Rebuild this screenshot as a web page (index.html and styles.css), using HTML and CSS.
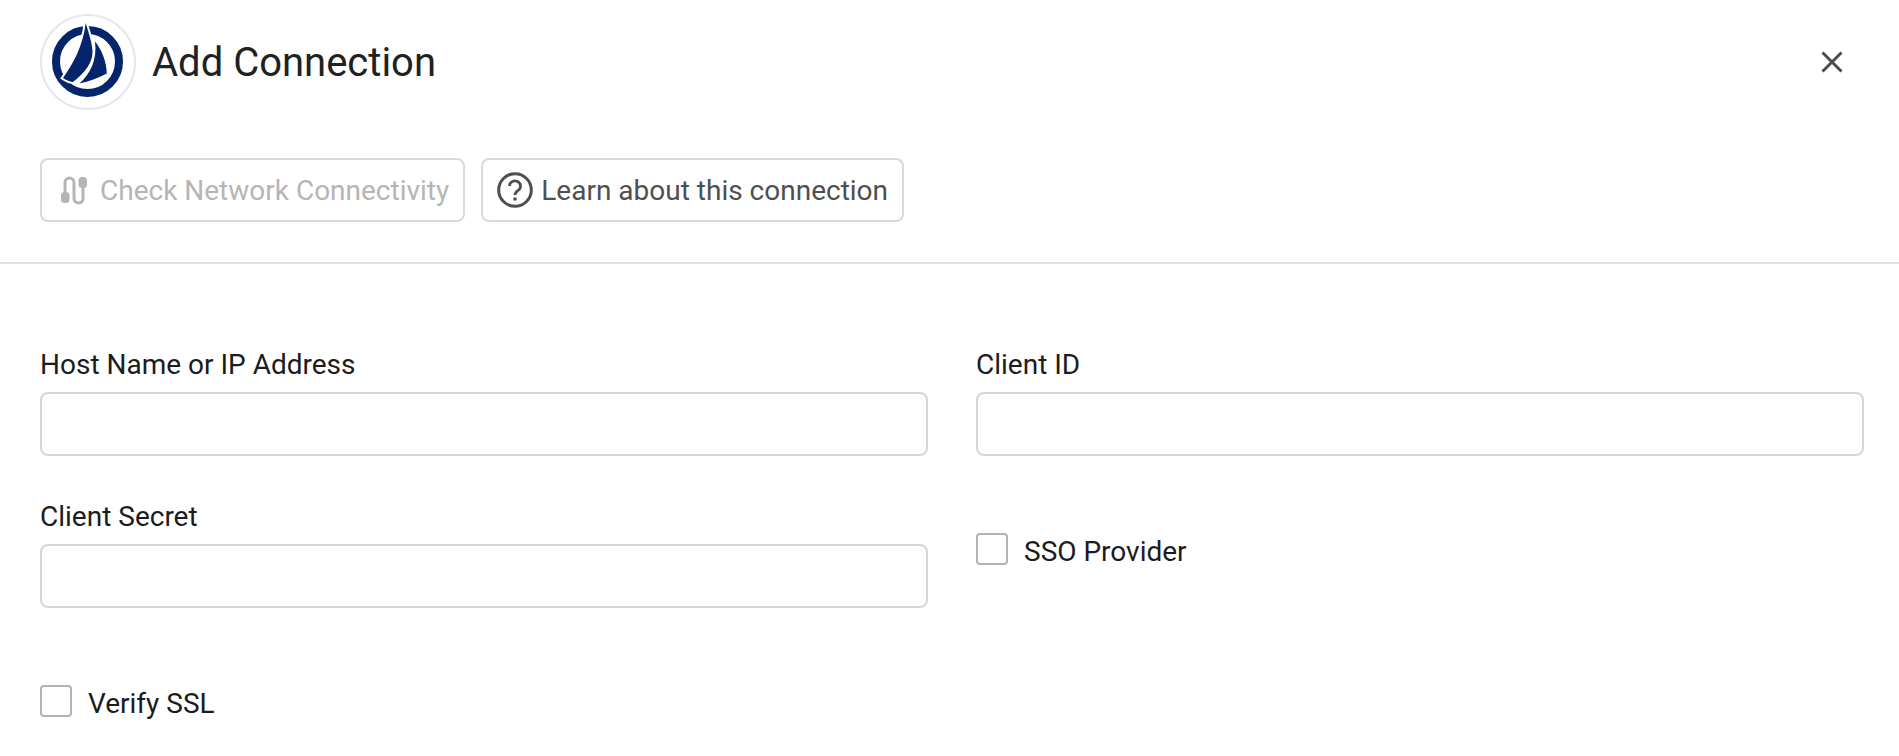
FILE: index.html
```html
<!DOCTYPE html>
<html>
<head>
    <title>Add Connection</title>
    <link rel="stylesheet" href="styles.css">
</head>
<body>
    <div class="dialog-head">
        <div class="title-row">
            <svg class="logo" width="96" height="96" viewBox="0 0 96 96">
                <circle cx="48" cy="48" r="47" fill="#fff" stroke="#e3e6ee" stroke-width="2"/>
                <circle cx="47.5" cy="47.5" r="31.5" fill="none" stroke="#04256b" stroke-width="8"/>
                <path d="M45.7 9 C49 20 52.5 30 52.5 38 C52.5 48 46 58 33 68 C29 67.5 26 66 23 64 C33 50 43 32 45.7 9 Z" fill="#fff" stroke="#fff" stroke-width="4"/>
                <path d="M45.7 9 C49 20 52.5 30 52.5 38 C52.5 48 46 58 33 68 C29 67.5 26 66 23 64 C33 50 43 32 45.7 9 Z" fill="#04256b"/>
                <path d="M55 27.5 C62 36 66.5 48 66.8 59.5 C58 64 49 67.5 39.5 69.5 C50 60 57.5 46 55 27.5 Z" fill="#04256b"/>
            </svg>
            <h1>Add Connection</h1>
            <button class="close-btn" aria-label="Close">
                <svg width="24" height="24" viewBox="0 0 24 24"><path d="M2.5 2.5 L21.5 21.5 M21.5 2.5 L2.5 21.5" stroke="#4d4d4d" stroke-width="3" fill="none"/></svg>
            </button>
        </div>
        <div class="actions">
            <button class="action-btn" disabled>
                <svg width="36" height="36" viewBox="0 0 36 36">
                    <path d="M9 22 V10.5 a4.5 4.5 0 0 1 9 0 V26.5 a4.5 4.5 0 0 0 9 0 V13" fill="none" stroke="currentColor" stroke-width="3"/>
                    <rect x="5" y="20" width="8.5" height="11" rx="3.5" fill="currentColor"/>
                    <rect x="22.5" y="5" width="8.5" height="11" rx="3.5" fill="currentColor"/>
                </svg>
                Check Network Connectivity
            </button>
            <button class="action-btn">
                <svg width="36" height="36" viewBox="0 0 36 36">
                    <circle cx="18" cy="18" r="16.3" fill="none" stroke="currentColor" stroke-width="3"/>
                    <path d="M12.5 14 a5.5 5.2 0 1 1 8.6 4.4 c-2 1.4 -3.1 2.2 -3.1 4.6" fill="none" stroke="currentColor" stroke-width="2.8"/>
                    <circle cx="18" cy="27" r="1.8" fill="currentColor"/>
                </svg>
                Learn about this connection
            </button>
        </div>
    </div>

    <form class="conn-form">
        <div class="field">
            <label for="host">Host Name or IP Address</label>
            <input id="host" type="text">
        </div>
        <div class="field">
            <label for="client-id">Client ID</label>
            <input id="client-id" type="text">
        </div>
        <div class="field">
            <label for="secret">Client Secret</label>
            <input id="secret" type="text">
        </div>
        <div class="check-cell sso">
            <label class="check"><span class="box"></span><span class="check-text">SSO Provider</span></label>
        </div>
        <div class="check-cell">
            <label class="check"><span class="box"></span><span class="check-text">Verify SSL</span></label>
        </div>
    </form>
</body>
</html>
```

FILE: styles.css
```css
html, body { margin: 0; padding: 0; background: #fff; }
body { font-family: Roboto, Arial, sans-serif; color: #1c1c1c; height: 756px; overflow: hidden; }

.dialog-head { box-sizing: border-box; height: 264px; border-bottom: 2px solid #e0e0e0; padding: 14px 35px 0 40px; }
.title-row { display: flex; align-items: center; height: 96px; }
.logo { flex: none; }
h1 { margin: 0 0 0 16px; font-size: 40px; font-weight: 400; color: #212121; flex: 1; }
.close-btn { background: none; border: none; padding: 0; width: 24px; height: 24px; margin-right: 20px; }

.actions { display: flex; gap: 16px; margin-top: 48px; }
.action-btn {
    display: flex;
    align-items: center;
    gap: 8px;
    height: 64px;
    padding: 0 14px;
    background: #fff;
    border: 2px solid #d9d9d9;
    border-radius: 8px;
    font-family: Roboto, Arial, sans-serif;
    font-size: 28px;
    color: #4f4f4f;
    white-space: nowrap;
}
.action-btn[disabled] { color: #b5b5b5; }

.conn-form {
    display: grid;
    grid-template-columns: 888px 888px;
    column-gap: 48px;
    padding: 85px 0 0 40px;
}
.field { height: 152px; }
.field label { display: block; font-size: 28px; line-height: 32px; margin-bottom: 11px; }
.field input {
    display: block;
    width: 100%;
    height: 64px;
    box-sizing: border-box;
    border: 2px solid #d6d6d6;
    border-radius: 8px;
    background: #fff;
}
.check-cell { height: 102px; padding-top: 32px; box-sizing: border-box; }
.check-cell.sso { height: 152px; }
.check { display: flex; align-items: flex-start; font-size: 28px; line-height: 32px; }
.check-text { padding-top: 3px; }
.box {
    width: 32px;
    height: 32px;
    box-sizing: border-box;
    border: 2px solid #b3b3b3;
    border-radius: 4px;
    margin-right: 16px;
}
```
